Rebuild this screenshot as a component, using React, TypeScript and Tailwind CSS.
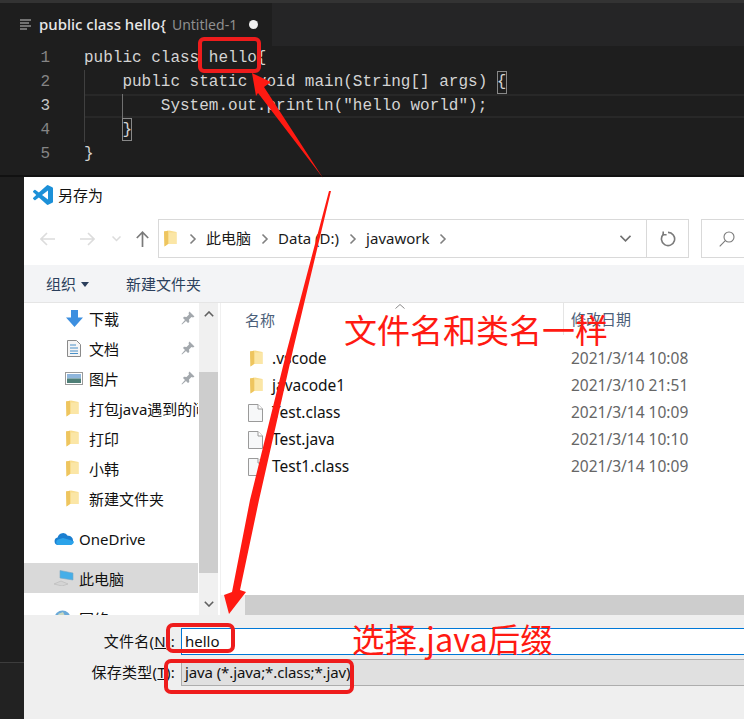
import React from "react";

const ui = "font-['Noto_Sans','Noto_Sans_CJK_SC',sans-serif]";

function Folder({ className = "" }: { className?: string }) {
  return (
    <svg width="13" height="17" viewBox="0 0 13 17" className={className}>
      <path d="M0 1.5 L5 .5 L12.5 2 V14 H4 L0.5 16.5 Z" fill="#f8dc8c" />
      <path d="M0 1.5 L4 .8 V14 L0.5 16.5 Z" fill="#eec55f" />
      <path d="M5 2.5 H12.5 V14 H5 Z" fill="#fbe6a6" />
    </svg>
  );
}

function FileIcon() {
  return (
    <svg width="15" height="18" viewBox="0 0 15 18">
      <path d="M.5.5 H10 L14.5 5 V17.5 H.5 Z" fill="#f7f8f9" stroke="#9a9a9a" />
      <path d="M10 .5 V5 H14.5" fill="#fff" stroke="#9a9a9a" />
    </svg>
  );
}

function Pin() {
  return (
    <svg width="14" height="14" viewBox="0 0 14 14" fill="#a3a8ad">
      <path d="M8.5.5 L13.5 5.5 L12 6.5 L10.5 6 L8 8.5 L8.3 11 L7 12 L2 7 L3 5.7 L5.5 6 L8 3.5 L7.5 2 Z" />
      <path d="M4.2 8.7 L5.3 9.8 L1 13.5 L.5 13 Z" />
    </svg>
  );
}

function NavRow({ icon, label, pin, active, tight }: { icon: React.ReactNode; label: string; pin?: boolean; active?: boolean; tight?: boolean }) {
  return (
    <div className={`flex h-[30px] shrink-0 items-center whitespace-nowrap overflow-hidden ${active ? "bg-[#d9d9d9]" : ""} ${tight ? "pl-[30px]" : "pl-[42px]"}`}>
      <span className={`flex shrink-0 items-center justify-start ${tight ? "w-[25px]" : "w-[23px]"}`}>{icon}</span>
      <span className={`pt-[2px] text-[15px] text-[#111] ${pin ? "w-[90px] shrink-0" : ""}`}>{label}</span>
      {pin && <span className="ml-[2px] flex"><Pin /></span>}
    </div>
  );
}

const files: [string, string, boolean][] = [
  [".vscode", "2021/3/14 10:08", true],
  ["javacode1", "2021/3/10 21:51", true],
  ["Test.class", "2021/3/14 10:09", false],
  ["Test.java", "2021/3/14 10:10", false],
  ["Test1.class", "2021/3/14 10:09", false],
];

function Sep() {
  return (
    <svg width="8" height="12" viewBox="0 0 8 12" fill="none" stroke="#808080" strokeWidth="1.6" className="ml-[10px] mr-[9px] shrink-0">
      <path d="M1.5 1.5 L6 6 L1.5 10.5" />
    </svg>
  );
}

export default function App() {
  return (
    <div className="relative flex h-[719px] w-[744px] flex-col overflow-hidden bg-[#1e1e1e]">
      {/* Editor */}
      <div className="h-[3px] shrink-0 bg-[#333333]" />
      <div className="flex h-[43px] shrink-0 bg-[#252526]">
        <div className={`flex w-[272px] items-center whitespace-nowrap bg-[#1e1e1e] pl-[20px] pb-[1px] ${ui}`}>
          <svg width="12" height="11" viewBox="0 0 12 11" stroke="#c5c5c5" strokeWidth="1.2">
            <path d="M0 1h11M0 4h9M0 7h11M0 10h7" />
          </svg>
          <span className="ml-[7px] text-[15px] font-medium text-[#e8e8e8]">public class hello{"{"}</span>
          <span className="ml-[6px] text-[14px] text-[#8f8f8f]">Untitled-1</span>
          <span className="ml-[12px] h-[9px] w-[9px] rounded-full bg-[#f0f0f0]" />
        </div>
      </div>
      <div className="h-[129px] shrink-0 font-['Liberation_Mono',monospace] text-[16px] text-[#d4d4d4]">
        {[
          ["1", "public class hello{"],
          ["2", "    public static void main(String[] args) {"],
          ["3", "        System.out.println(\"hello world\");"],
          ["4", "    }"],
          ["5", "}"],
        ].map(([n, c], i) => (
          <div key={n} className="relative flex h-[24px] items-center">
            {i === 2 && <span className="absolute inset-y-0 left-[84px] right-0 border-y-2 border-[#282828]" />}
            <span className={`relative w-[50px] text-right ${i === 2 ? "text-[#c6c6c6]" : "text-[#858585]"}`}>{n}</span>
            <span className="relative ml-[34px] whitespace-pre">{c}</span>
            {(i === 1 || i === 2 || i === 3) && <span className="absolute left-[84px] top-0 h-full w-px bg-[#404040]" />}
            {i === 2 && <span className="absolute left-[122px] top-0 h-full w-px bg-[#707070]" />}
            {i === 1 && <span className="absolute left-[497px] top-[1px] h-[23px] w-[10px] border border-[#888]" />}
            {i === 3 && <span className="absolute left-[122px] top-[0px] h-[23px] w-[10px] border border-[#888]" />}
          </div>
        ))}
      </div>
      <div className="h-[2px] shrink-0 bg-[#111111]" />

      {/* Lower region */}
      <div className={`flex min-h-0 flex-1 ${ui}`}>
        <div className="flex w-[24px] shrink-0 flex-col bg-[#1e1e1e]">
          <div className="h-[486px] border-b border-[#3c3c3c]" />
          <div className="flex-1 bg-[#222222]" />
        </div>
        <div className="flex min-w-0 flex-1 flex-col overflow-hidden bg-white">
          {/* Title */}
          <div className="flex h-[42px] shrink-0 items-start pl-[9px] pt-[8px]">
            <svg width="20" height="20" viewBox="0 0 24 24">
              <path fill="#1c90d8" d="M23.15 2.587L18.21.21a1.494 1.494 0 0 0-1.705.29l-9.46 8.63-4.12-3.128a.999.999 0 0 0-1.276.057L.327 7.261A1 1 0 0 0 .326 8.74L3.899 12 .326 15.26a1 1 0 0 0 .001 1.479L1.65 17.94a.999.999 0 0 0 1.276.057l4.12-3.128 9.46 8.63a1.492 1.492 0 0 0 1.704.29l4.942-2.377A1.5 1.5 0 0 0 24 20.06V3.939a1.5 1.5 0 0 0-.85-1.352zm-5.146 14.861L10.826 12l7.178-5.448v10.896z" />
            </svg>
            <span className="ml-[5px] text-[15px] leading-[20px] text-[#111]">另存为</span>
          </div>
          {/* Address */}
          <div className="flex h-[46px] shrink-0 items-start">
            <div className="flex h-[39px] w-[134px] shrink-0 items-center">
              <svg width="16" height="14" viewBox="0 0 16 14" fill="none" stroke="#dcdcdc" strokeWidth="1.6" className="ml-[16px]">
                <path d="M15 7H1M7 1 L1 7 L7 13" />
              </svg>
              <svg width="16" height="14" viewBox="0 0 16 14" fill="none" stroke="#dcdcdc" strokeWidth="1.6" className="ml-[23px]">
                <path d="M1 7H15M9 1 L15 7 L9 13" />
              </svg>
              <svg width="9" height="6" viewBox="0 0 9 6" fill="none" stroke="#dcdcdc" strokeWidth="1.5" className="ml-[17px]">
                <path d="M.5 .5 L4.5 4.5 L8.5 .5" />
              </svg>
              <svg width="13" height="16" viewBox="0 0 13 16" fill="none" stroke="#7a7a7a" strokeWidth="1.7" className="ml-[15px]">
                <path d="M6.5 16V1M.8 7 L6.5 1.2 L12.2 7" />
              </svg>
            </div>
            <div className="flex h-[39px] w-[531px] shrink-0 items-center whitespace-nowrap border border-[#d9d9d9] text-[15px] text-[#1a1a1a]">
              <Folder className="ml-[5px] shrink-0" />
              <span className="ml-[2px] flex items-center"><Sep /></span>
              <span>此电脑</span>
              <Sep />
              <span>Data (D:)</span>
              <Sep />
              <span>javawork</span>
              <Sep />
              <svg width="11" height="7" viewBox="0 0 11 7" fill="none" stroke="#707070" strokeWidth="1.6" className="ml-auto mr-[15px] shrink-0">
                <path d="M.5 .8 L5.5 5.8 L10.5 .8" />
              </svg>
              <span className="flex h-full w-[42px] shrink-0 items-center justify-center border-l border-[#d9d9d9]">
                <svg width="16" height="16" viewBox="0 0 16 16" fill="none" stroke="#7a7a7a" strokeWidth="1.6">
                  <path d="M3.5 3.2 A6.6 6.6 0 1 0 8 1.4" />
                  <path d="M3.2 .4 V3.8 H6.6" />
                </svg>
              </span>
            </div>
            <div className="ml-[12px] flex h-[39px] w-[60px] shrink-0 items-center border border-[#d9d9d9] pl-[17px]">
              <svg width="16" height="16" viewBox="0 0 16 16" fill="none" stroke="#7a7a7a" strokeWidth="1.1">
                <circle cx="10" cy="6" r="5" />
                <path d="M6.3 9.7 L.7 15.3" />
              </svg>
            </div>
          </div>
          {/* Toolbar */}
          <div className="flex h-[38px] shrink-0 items-center border-b border-[#e5e5e5] bg-[#f3f4f6] pl-[22px] pt-[1px] text-[15px] text-[#2b3f5c]">
            <span>组织</span>
            <svg width="8" height="5" viewBox="0 0 8 5" fill="#2b3f5c" className="ml-[5px]">
              <path d="M0 0H8L4 5Z" />
            </svg>
            <span className="ml-[37px]">新建文件夹</span>
          </div>
          {/* Main */}
          <div className="flex h-[312px] shrink-0 overflow-hidden">
            <div className="flex w-[174px] shrink-0 flex-col">
              <NavRow label="下载" pin icon={
                <svg width="17" height="17" viewBox="0 0 17 17"><path d="M5 0H12V7.5H17L8.5 17L0 7.5H5Z" fill="#3d8fe0" /></svg>
              } />
              <NavRow label="文档" pin icon={
                <svg width="15" height="17" viewBox="0 0 15 17"><path d="M1.5.5H10.5L14.5 4.5V16.5H1.5Z" fill="#f5f5f5" stroke="#8a8a8a" /><path d="M4 5H10M4 8H12M4 11H12M4 13.5H12" stroke="#4a90c8" /></svg>
              } />
              <NavRow label="图片" pin icon={
                <svg width="18" height="13" viewBox="0 0 18 13" className="-ml-[1px]"><rect x=".5" y=".5" width="17" height="12" fill="#fff" stroke="#9a9a9a" /><rect x="2" y="2" width="14" height="4.5" fill="#8fb6dc" /><rect x="2" y="6.5" width="14" height="4.5" fill="#4f7f77" /></svg>
              } />
              <NavRow label="打包java遇到的问题" icon={<Folder />} />
              <NavRow label="打印" icon={<Folder />} />
              <NavRow label="小韩" icon={<Folder />} />
              <NavRow label="新建文件夹" icon={<Folder />} />
              <div className="h-[10px] shrink-0" />
              <NavRow tight label="OneDrive" icon={
                <svg width="20" height="13" viewBox="0 0 20 13"><path d="M4 13A3.8 3.8 0 0 1 3.6 5.5 5.5 5.5 0 0 1 13.7 3.8 4.6 4.6 0 0 1 19 8.5 4 4 0 0 1 16 13Z" fill="#1b7fd0" /><path d="M4 13A3 3 0 0 1 4 7.5L9 6L16 8L20 9.5A4 4 0 0 1 16 13Z" fill="#2ba3ea" /></svg>
              } />
              <div className="h-[10px] shrink-0" />
              <NavRow active tight label="此电脑" icon={
                <svg width="20" height="16" viewBox="0 0 20 16"><path d="M6 0.5L19 3V10L6 8Z" fill="#45aee8" stroke="#7aa7c4" strokeWidth=".6" /><path d="M0 14L7 11L14 14L8 16Z" fill="#d4d4d4" stroke="#b0b0b0" strokeWidth=".5" /></svg>
              } />
              <div className="h-[10px] shrink-0" />
              <NavRow tight label="网络" icon={
                <svg width="17" height="17" viewBox="0 0 17 17"><circle cx="8.5" cy="8.5" r="8" fill="#6aa9d8" /><path d="M4 4L9 2L11 6L7 9Z" fill="#c8d8c0" /></svg>
              } />
            </div>
            <div className="ml-[1px] flex w-[19px] shrink-0 flex-col bg-[#f0f0f0]">
              <div className="flex h-[22px] shrink-0 items-center justify-center">
                <svg width="10" height="6" viewBox="0 0 10 6" fill="none" stroke="#606060" strokeWidth="1.6"><path d="M.8 5.2 L5 1 L9.2 5.2" /></svg>
              </div>
              <div className="mt-[47px] h-[201px] shrink-0 bg-[#cdcdcd]" />
              <div className="flex flex-1 items-end justify-center pb-[8px]">
                <svg width="10" height="6" viewBox="0 0 10 6" fill="none" stroke="#606060" strokeWidth="1.6"><path d="M.8 .8 L5 5 L9.2 .8" /></svg>
              </div>
            </div>
            <div className="ml-[2px] flex min-w-0 flex-1 flex-col border-l border-[#f0f0f0]">
              <div className="flex h-[42px] shrink-0 items-start">
                <span className="relative ml-[24px] flex h-[32px] w-[318px] shrink-0 items-center pt-[2px] text-[15px] text-[#4c607a]">
                  名称
                  <svg width="10" height="5" viewBox="0 0 10 5" fill="none" stroke="#8a8a8a" className="absolute left-[150px] top-[1px]"><path d="M.5 4.5 L5 .5 L9.5 4.5" /></svg>
                </span>
                <span className="flex h-[32px] flex-1 items-center whitespace-nowrap border-l border-[#e5e5e5] pl-[7px] text-[15px] text-[#4c607a]">修改日期</span>
              </div>
              <div className="flex h-[250px] shrink-0 flex-col">
                {files.map(([n, d, folder]) => (
                  <div key={n} className="flex h-[27px] shrink-0 items-center whitespace-nowrap text-[15.5px]">
                    <span className="flex w-[51px] shrink-0 justify-end pr-[9px]">{folder ? <Folder /> : <FileIcon />}</span>
                    <span className="w-[299px] shrink-0 text-[#111]">{n}</span>
                    <span className="text-[#666]">{d}</span>
                  </div>
                ))}
              </div>
              <div className="flex h-[20px] shrink-0 bg-[#f0f0f0]">
                <div className="w-[24px] shrink-0" />
                <div className="flex-1 bg-[#cdcdcd]" />
              </div>
            </div>
          </div>
          {/* Bottom form */}
          <div className="flex flex-1 flex-col bg-[#efefef] pt-[13px] text-[15px] text-[#111]">
            <div className="flex h-[27px] items-center">
              <span className="w-[151px] shrink-0 text-right tracking-[0.25px]">文件名(<span className="underline">N</span>):</span>
              <div className="-mr-[4px] ml-[6px] flex h-full flex-1 items-center border border-[#0078d7] bg-white pl-[3px]">hello</div>
            </div>
            <div className="mt-[4px] flex h-[27px] items-center">
              <span className="w-[151px] shrink-0 text-right tracking-[0.25px]">保存类型(<span className="underline">T</span>):</span>
              <div className="-mr-[4px] ml-[6px] flex h-full flex-1 items-center border border-[#adadad] bg-[#e0e0e0] pl-[3px] tracking-[-0.1px]">java (*.java;*.class;*.jav)</div>
            </div>
          </div>
        </div>
      </div>

      {/* Annotations */}
      <svg width="744" height="719" viewBox="0 0 744 719" className="pointer-events-none absolute inset-0">
        <g fill="#ff1a12">
          <path d="M252 73 L271 82 L264 87 L323 178 L258 93 L256 96 Z" />
          <path d="M329 191 L331 191 L293 350 L259 500 L240 590 L246 592 L229 614 L224 595 L232 592 L250 500 L287 350 Z" />
        </g>
        <g fill="none" stroke="#ee1c1c" strokeWidth="4">
          <rect x="200" y="39" width="59" height="32" rx="4" />
          <rect x="168" y="625" width="65" height="26" rx="5" />
          <rect x="166" y="661" width="186" height="31" rx="5" />
        </g>
      </svg>
      <span className="absolute left-[344px] top-[305px] whitespace-nowrap font-['Noto_Sans_CJK_SC',sans-serif] text-[33px] leading-[48px] text-[#ff1a12]">文件名和类名一样</span>
      <span className="absolute left-[352px] top-[615px] whitespace-nowrap font-['Noto_Sans_CJK_SC',sans-serif] text-[32.5px] leading-[46px] text-[#ff1a12]">选择.java后缀</span>
    </div>
  );
}
